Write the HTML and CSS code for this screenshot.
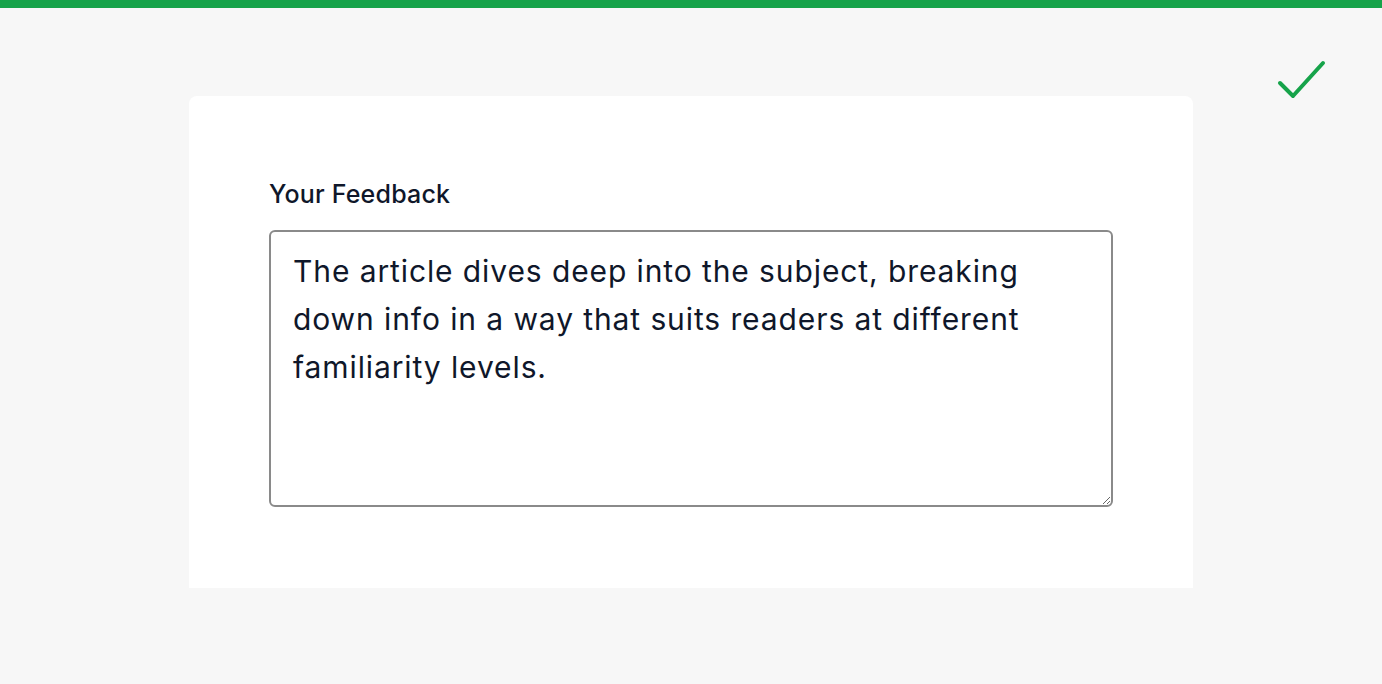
FILE: index.html
```html
<!DOCTYPE html>
<html lang="en">
<head>
    <meta charset="UTF-8">
    <meta name="viewport" content="width=device-width, initial-scale=1.0">
    <title>Feedback</title>
    <link rel="stylesheet" href="styles.css">
</head>
<body>
    <div class="top-bar"></div>

    <div class="saved-mark">
        <svg width="52" height="48" viewBox="0 0 52 48">
            <path d="M4 27 L17 40 L47 7" fill="none" stroke="#16a34a" stroke-width="4" stroke-linecap="round" stroke-linejoin="round"/>
        </svg>
    </div>

    <div class="card">
        <label class="field-label" for="feedback">Your Feedback</label>
        <textarea id="feedback" class="feedback-box">The article dives deep into the subject, breaking down info in a way that suits readers at different familiarity levels.</textarea>
    </div>
</body>
</html>
```

FILE: styles.css
```css
body {
    margin: 0;
    background-color: #f7f7f7;
    font-family: Inter, "Noto Sans", sans-serif;
    color: #0f172a;
}

.top-bar {
    height: 8px;
    background-color: #16a34a;
}

.saved-mark {
    position: absolute;
    top: 56px;
    left: 1276px;
}

.card {
    display: flex;
    flex-direction: column;
    width: 844px;
    margin: 88px auto 0;
    padding: 80px 80px 81px;
    background-color: #fff;
    border-radius: 8px 8px 0 0;
}

.field-label {
    font-size: 25px;
    font-weight: 500;
    letter-spacing: 0.2px;
    line-height: 36px;
    margin-bottom: 18px;
}

.feedback-box {
    box-sizing: border-box;
    width: 100%;
    height: 277px;
    padding: 15px 22px;
    border: 2px solid #8a8a8a;
    border-radius: 6px;
    font-family: inherit;
    font-size: 30px;
    letter-spacing: 0.9px;
    line-height: 48px;
    color: #0f172a;
    resize: vertical;
}
```
